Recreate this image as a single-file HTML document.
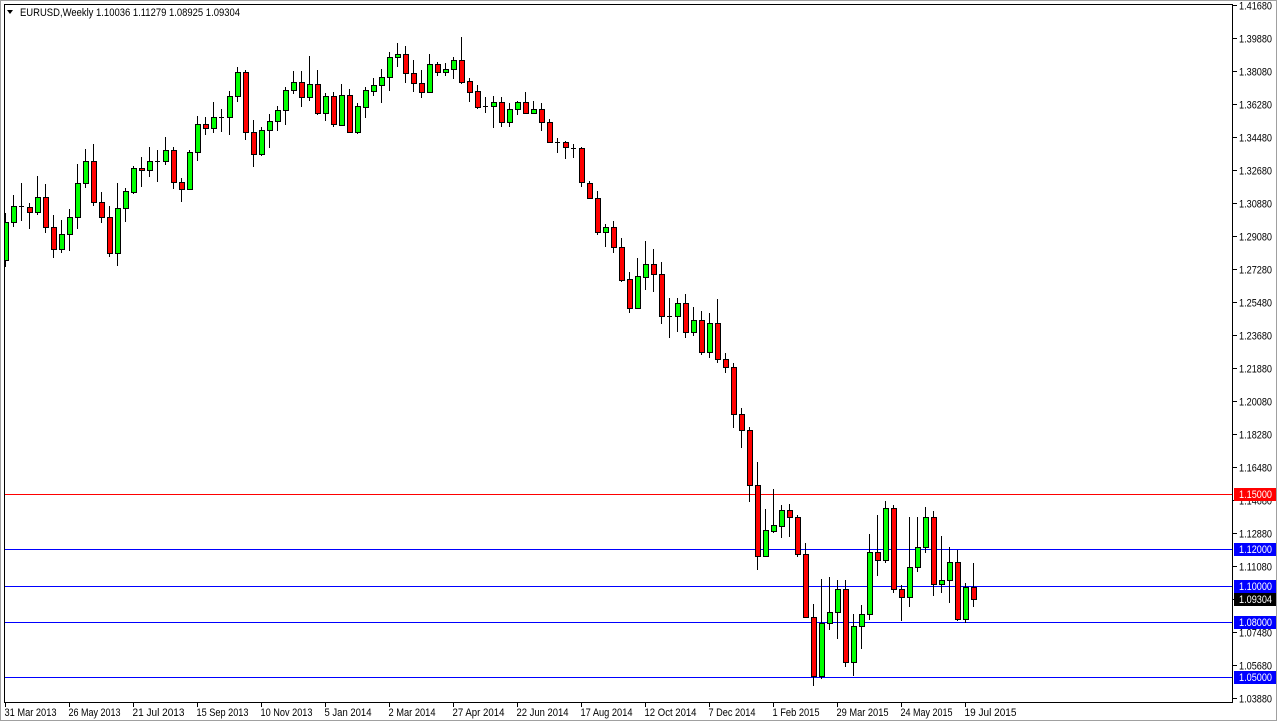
<!DOCTYPE html>
<html><head><meta charset="utf-8"><style>
html,body{margin:0;padding:0;background:#fff;width:1278px;height:722px;overflow:hidden}
svg{display:block;font-family:"Liberation Sans",Arial,sans-serif}
</style></head><body>
<svg id="s" width="1278" height="722" xmlns="http://www.w3.org/2000/svg">
<rect x="0" y="0" width="1278" height="722" fill="#fff"/>
<rect x="0.5" y="0.5" width="1276" height="720" fill="none" stroke="#a0a0a0"/>
<rect x="4.5" y="4.5" width="1228" height="698" fill="none" stroke="#000"/>
<text x="20" y="16" font-size="11" fill="#000" textLength="220" lengthAdjust="spacingAndGlyphs">EURUSD,Weekly  1.10036 1.11279 1.08925 1.09304</text>
<path d="M7 10 L13 10 L10 14 Z" fill="#000"/>
<g id="lines"></g>
<g id="c"></g>
<g id="ax" font-size="11"></g>
</svg>
<script>
var D=[[260,222,213,267],[222,206,195,227],[206,206,183,221],[207,212,203,229],[212,197,176,215],[197,227,184,233],[227,249,215,258],[249,234,220,253],[234,217,209,251],[217,183,164,229],[183,161,149,188],[161,202,144,206],[202,217,192,223],[217,253,206,257],[253,208,183,266],[208,191,188,222],[192,168,166,194],[168,170,157,187],[170,161,147,177],[161,161,150,182],[161,150,137,165],[150,182,147,189],[182,189,178,202],[189,152,150,189],[152,124,116,161],[124,128,117,135],[128,117,102,133],[117,117,109,132],[117,96,91,135],[96,72,67,102],[72,132,70,140],[132,154,120,167],[154,130,127,156],[130,121,114,148],[121,110,106,131],[110,90,87,125],[90,82,71,94],[82,97,71,107],[97,84,56,101],[84,113,70,115],[113,96,93,121],[96,124,92,127],[125,95,84,126],[95,132,89,133],[132,106,103,134],[107,90,87,118],[91,85,78,96],[85,77,69,103],[77,57,52,91],[57,54,43,67],[54,73,46,83],[73,83,60,92],[83,92,70,98],[92,64,54,92],[64,72,62,76],[72,69,63,76],[69,60,57,79],[60,82,37,84],[81,92,78,102],[91,107,85,109],[106,106,97,113],[106,102,96,128],[102,122,97,127],[122,109,103,127],[109,102,101,115],[102,113,92,114],[113,109,101,114],[109,122,103,131],[122,142,119,143],[142,142,138,153],[142,147,141,159],[148,148,144,158],[148,182,147,187],[183,198,181,198],[198,232,191,235],[232,227,224,247],[227,247,221,253],[247,280,238,282],[279,308,272,313],[308,276,258,309],[277,264,241,290],[264,274,249,292],[274,316,262,324],[316,316,298,338],[316,303,298,332],[303,332,294,338],[332,320,307,336],[320,352,311,355],[352,323,313,358],[323,359,299,363],[359,367,353,373],[367,414,363,428],[414,430,408,448],[430,485,427,502],[485,556,462,570],[556,530,509,556],[531,525,489,533],[526,510,505,538],[510,517,504,537],[517,554,515,557],[554,617,543,618],[617,676,604,686],[676,623,579,679],[623,612,577,630],[612,589,580,639],[589,662,580,667],[662,626,614,676],[626,614,605,649],[614,552,534,620],[552,560,515,576],[560,508,501,563],[508,589,505,593],[589,597,585,621],[597,567,517,607],[567,547,517,572],[547,517,507,553],[517,584,511,596],[584,580,536,593],[580,562,547,603],[562,619,550,621],[619,587,583,623],[587,599,563,607]];
var h="";
function py(p){return 5+(1.4168-p)*1833.33;}
var L=[[1.15,"#ff0000","1.15000"],[1.12,"#0000ff","1.12000"],[1.10,"#0000ff","1.10000"],[1.08,"#0000ff","1.08000"],[1.05,"#0000ff","1.05000"]];
var lh="";
L.forEach(function(l){var y=Math.round(py(l[0]))+0.5;lh+='<line x1="5" x2="1232" y1="'+y+'" y2="'+y+'" stroke="'+l[1]+'" stroke-width="1"/>';});
document.getElementById("lines").innerHTML=lh;
D.forEach(function(d,i){var x=5+8*i;var o=d[0],c=d[1];var top=Math.min(o,c),b=Math.max(o,c);
var col=c<o?"#00ff00":(c>o?"#ff0000":"#000");
h+='<line x1="'+(x+0.5)+'" x2="'+(x+0.5)+'" y1="'+d[2]+'" y2="'+d[3]+'" stroke="#000"/>';
if(b-top<1){h+='<line x1="'+(x-2)+'" x2="'+(x+3)+'" y1="'+(top+0.5)+'" y2="'+(top+0.5)+'" stroke="#000"/>';}
else h+='<rect x="'+(x-2+0.5)+'" y="'+(top+0.5)+'" width="5" height="'+(b-top)+'" fill="'+col+'" stroke="#000"/>';});
document.getElementById("c").innerHTML='<svg x="5" y="5" width="1227" height="697" viewBox="5 5 1227 697">'+h+'</svg>';
var a="";
var TL=' textLength="33" lengthAdjust="spacingAndGlyphs"';
for(var k=0;k<22;k++){var p=1.4168-0.018*k;var y=Math.round(py(p))+0.5;
a+='<line x1="1233" x2="1237" y1="'+y+'" y2="'+y+'" stroke="#000"/>';
a+='<text x="1239" y="'+(y+4)+'" fill="#000"'+TL+'>'+p.toFixed(5)+'</text>';}
L.forEach(function(l){var y=Math.round(py(l[0]));
a+='<rect x="1234" y="'+(y-6)+'" width="42" height="13" fill="'+l[1]+'"/><text x="1239" y="'+(y+4)+'" fill="#fff"'+TL+'>'+l[2]+'</text>';});
var yc=Math.round(py(1.09304));
a+='<rect x="1234" y="'+(yc-6)+'" width="42" height="13" fill="#000"/><text x="1239" y="'+(yc+4)+'" fill="#fff"'+TL+'>1.09304</text>';
var dates=["31 Mar 2013","26 May 2013","21 Jul 2013","15 Sep 2013","10 Nov 2013","5 Jan 2014","2 Mar 2014","27 Apr 2014","22 Jun 2014","17 Aug 2014","12 Oct 2014","7 Dec 2014","1 Feb 2015","29 Mar 2015","24 May 2015","19 Jul 2015"];
dates.forEach(function(t,i){var x=5+64*i+0.5;var w=Math.round(t.length*4.7);a+='<line x1="'+x+'" x2="'+x+'" y1="702" y2="707" stroke="#000"/><text x="'+(x-1)+'" y="716" fill="#000" textLength="'+w+'" lengthAdjust="spacingAndGlyphs">'+t+'</text>';});
document.getElementById("ax").innerHTML=a;
</script>
</body></html>
